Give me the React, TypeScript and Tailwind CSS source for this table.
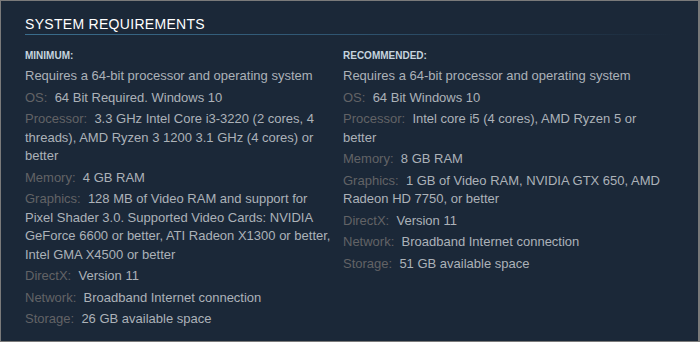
const minimum = [
  { label: null, value: "Requires a 64-bit processor and operating system" },
  { label: "OS:", value: "64 Bit Required. Windows 10" },
  { label: "Processor:", value: "3.3 GHz Intel Core i3-3220 (2 cores, 4 threads), AMD Ryzen 3 1200 3.1 GHz (4 cores) or better" },
  { label: "Memory:", value: "4 GB RAM" },
  { label: "Graphics:", value: "128 MB of Video RAM and support for Pixel Shader 3.0. Supported Video Cards: NVIDIA GeForce 6600 or better, ATI Radeon X1300 or better, Intel GMA X4500 or better" },
  { label: "DirectX:", value: "Version 11" },
  { label: "Network:", value: "Broadband Internet connection" },
  { label: "Storage:", value: "26 GB available space" },
];

const recommended = [
  { label: null, value: "Requires a 64-bit processor and operating system" },
  { label: "OS:", value: "64 Bit Windows 10" },
  { label: "Processor:", value: "Intel core i5 (4 cores), AMD Ryzen 5 or better" },
  { label: "Memory:", value: "8 GB RAM" },
  { label: "Graphics:", value: "1 GB of Video RAM, NVIDIA GTX 650, AMD Radeon HD 7750, or better" },
  { label: "DirectX:", value: "Version 11" },
  { label: "Network:", value: "Broadband Internet connection" },
  { label: "Storage:", value: "51 GB available space" },
];

type Req = { label: string | null; value: string };

function ReqColumn({ title, items }: { title: string; items: Req[] }) {
  return (
    <div>
      <div className="text-[10px] leading-[14px] font-bold uppercase text-[#c6d4df]">{title}</div>
      <ul className="mt-[4px]">
        {items.map((item) => (
          <li key={item.value} className="mb-[3px] text-[13px] leading-[18.5px] text-[#acb2b8]">
            {item.label && <span className="text-[#626366]">{item.label}{"\u00a0 "}</span>}
            <span>{item.value}</span>
          </li>
        ))}
      </ul>
    </div>
  );
}

export default function App() {
  return (
    <div
      className="w-[700px] h-[342px] overflow-hidden bg-[#1b2838] border border-r-2 border-[#7a7a7a]"
      style={{ fontFamily: '"Liberation Sans", Arial, sans-serif' }}
    >
      <div className="pl-[24px] pr-[24px] pt-[13px]">
        {/* Heading */}
        <h2 className="text-[14px] leading-[20px] tracking-[0.3px] uppercase text-white">
          System Requirements
        </h2>
        <div className="h-px bg-gradient-to-r from-[#3a6d8c] via-[#2f5470] to-transparent" />

        {/* Columns */}
        <div className="mt-[14px] grid grid-cols-[311px_318px] gap-x-[7px]">
          <ReqColumn title="Minimum:" items={minimum} />
          <ReqColumn title="Recommended:" items={recommended} />
        </div>
      </div>
    </div>
  );
}
